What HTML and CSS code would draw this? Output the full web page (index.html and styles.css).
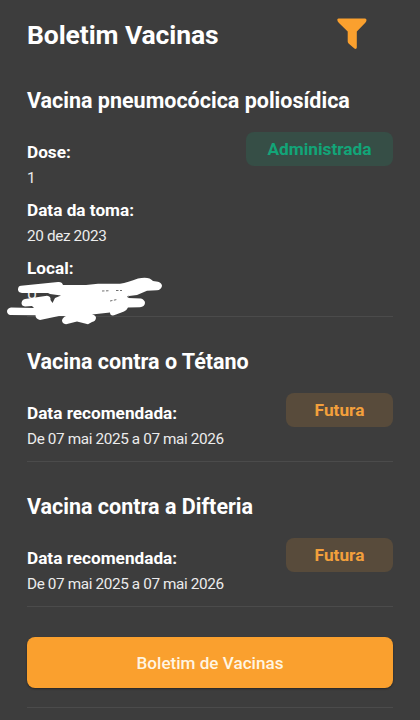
FILE: index.html
```html
<!DOCTYPE html>
<html lang="pt">
<head>
<meta charset="utf-8">
<title>Boletim Vacinas</title>
<link rel="stylesheet" href="styles.css">
</head>
<body>
<main class="screen">
  <header class="header">
    <h1 class="title">Boletim Vacinas</h1>
    <svg class="filter" width="30" height="32" viewBox="0 0 30 32" aria-hidden="true"><path d="M1.500 .5H28Q29.600 .5 29.500 2.200Q29.400 3.600 28.300 4.700L19.800 13.400V29.500Q19.600 31.600 17.400 30.600L11.600 25.400Q10.700 24.600 10.700 23.400V13.400L2 4.900Q.4 3.500 .3 2.100Q.1 .5 1.500 .5Z"/></svg>
  </header>

  <section class="vaccine">
    <h2 class="name">Vacina pneumocócica poliosídica</h2>
    <div class="body">
      <dl class="details">
        <dt>Dose:</dt><dd>1</dd>
        <dt>Data da toma:</dt><dd>20 dez 2023</dd>
        <dt>Local:</dt>
        <dd class="redacted">U
          <svg class="scribble" width="160" height="52" viewBox="5 274 160 52" aria-hidden="true">
            <path class="ink" d="M21 285.700L58 282Q62 281.500 63 285L86 285L98 283.700L120 283.700Q128 282.500 138 278.500Q149 276 153 281L158 281.700Q162 283 162 286Q161 290 157 290.300L147 290.800L137 295L129 296L128 298L141 298.500Q145 300 145 303Q144.500 307 140 307.200L128 307.500Q127 310 124 311.500L114 315.300Q110 316 110 312.500L92 314.500Q96 315 96 318Q95.500 321.500 92 322L88 324.200L77 321.500L66 324.200Q62 323.500 62 320.500Q62.500 317.500 66 316L59 316L40 320Q35.500 319 35.500 315.300L10 315Q7 314 7 311Q7.500 308 11 307.500L34 308L32 306L25 306.500Q21.500 306 21.500 303Q22 299.500 25 299L47 295.700Q51 296 50.500 300L52.500 303L55 298L61 295.500L50 294L48 293H22Q18 292.500 18 289.500Q18 286 21 285.700Z"/>
            <path class="gap" d="M102 291L110 290.700M116 290.500L122 290.500M110 301L117 299.500M127 297L129 296"/>
          </svg>
        </dd>
      </dl>
      <span class="badge done">Administrada</span>
    </div>
  </section>

  <section class="vaccine">
    <h2 class="name">Vacina contra o Tétano</h2>
    <div class="body">
      <dl class="details"><dt>Data recomendada:</dt><dd>De 07 mai 2025 a 07 mai 2026</dd></dl>
      <span class="badge future">Futura</span>
    </div>
  </section>

  <section class="vaccine">
    <h2 class="name">Vacina contra a Difteria</h2>
    <div class="body">
      <dl class="details"><dt>Data recomendada:</dt><dd>De 07 mai 2025 a 07 mai 2026</dd></dl>
      <span class="badge future">Futura</span>
    </div>
  </section>

  <div class="actions"><button class="button" type="button">Boletim de Vacinas</button></div>
</main>
</body>
</html>
```
FILE: styles.css
```css
* { box-sizing: border-box; }
body {
  margin: 0;
  background: #3d3d3d;
  color: #fff;
  font-family: Roboto, sans-serif;
}
.screen { height: 720px; padding: 0 27px; overflow: hidden; }
.header {
  display: flex;
  justify-content: space-between;
  height: 56px;
  padding: 18px 26px 0 0;
}
.title { margin: 0; font-size: 26.5px; line-height: 34px; font-weight: 700; letter-spacing: -.1px; }
.filter { fill: #faa02e; }
.vaccine { padding: 30px 0 9px; border-bottom: 1px solid #4b4b4b; }
.name { margin: 0 0 23px; font-size: 21.5px; line-height: 30px; font-weight: 700; white-space: nowrap; }
.body { display: flex; justify-content: space-between; align-items: flex-start; }
.details { margin: 0; white-space: nowrap; }
dt { font-size: 17.2px; line-height: 26px; font-weight: 700; }
dd { margin: 0 0 6px; font-size: 15.3px; line-height: 26px; letter-spacing: -.37px; color: #ececec; }
dd:last-child { margin-bottom: 0; }
.redacted { position: relative; height: 26px; }
.scribble { position: absolute; left: -22px; top: -7px; }
.scribble .ink { fill: #fff; }
.scribble .gap { fill: none; stroke: #4b4b4b; stroke-width: .8; stroke-dasharray: 2.5 1.5; }
.badge {
  height: 34px;
  margin-top: -7px;
  border-radius: 8px;
  font-size: 17.3px;
  line-height: 35px;
  font-weight: 700;
  text-align: center;
}
.done { width: 147px; background: #364e46; color: #12a578; }
.future { width: 107px; background: #584b3b; color: #f3a03c; }
.actions { padding: 30px 0 19px; border-bottom: 1px solid #4b4b4b; }
.button {
  display: block;
  width: 100%;
  height: 51px;
  padding: 0;
  border: 0;
  border-radius: 8px;
  background: #faa02e;
  color: #fff5e2;
  font: 500 17.1px Roboto, sans-serif;
  box-shadow: 0 1px 2px rgba(0, 0, 0, .4);
}
```
